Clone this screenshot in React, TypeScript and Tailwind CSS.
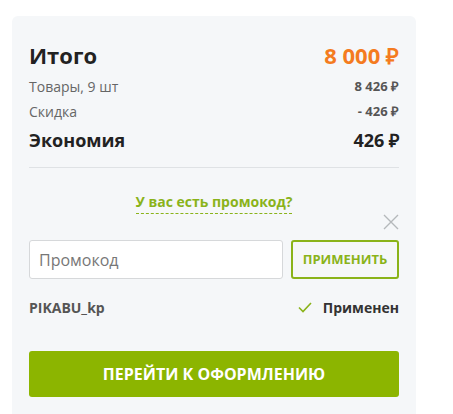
import { useState } from 'react';

interface Row {
  label: string;
  value: string;
}

const rows: Row[] = [
  { label: 'Товары, 9 шт', value: '8 426 ₽' },
  { label: 'Скидка', value: '- 426 ₽' },
];

export default function App() {
  const [code, setCode] = useState('');

  return (
    <div className="min-h-[414px] bg-white pt-4 pl-3 font-['Open_Sans',sans-serif]">
      <div className="w-[404px] rounded-t-md bg-[#f5f7f9] px-[17px] pt-[25px] pb-6">
        {/* Totals */}
        <div className="flex h-[28px] items-center justify-between">
          <span className="text-[22px] font-bold text-[#222]">Итого</span>
          <span className="text-[22px] font-bold text-[#f47b20]">8 000 ₽</span>
        </div>
        <div className="mt-[5px]">
          {rows.map((row) => (
            <div key={row.label} className="flex h-[25px] items-center justify-between">
              <span className="text-[14px] text-[#666]">{row.label}</span>
              <span className="text-[13px] font-bold text-[#555]">{row.value}</span>
            </div>
          ))}
        </div>
        <div className="mt-[2px] flex h-[28px] items-center justify-between">
          <span className="text-[18px] font-bold text-[#222]">Экономия</span>
          <span className="text-[18px] font-bold text-[#222]">426 ₽</span>
        </div>
        <div className="mt-[13px] h-px bg-[#dfe2e5]" />

        {/* Promo code */}
        <div className="mt-[24px] flex justify-center">
          <span className="border-b border-dashed border-[#8ab31a] pb-[1px] text-[14px] leading-[20px] font-bold text-[#8ab31a]">
            У вас есть промокод?
          </span>
        </div>
        <div className="flex justify-end">
          <button className="text-[#b5b8bb]" aria-label="Закрыть">
            <svg width="16" height="16" viewBox="0 0 16 16" fill="none" stroke="currentColor" strokeWidth="1.4">
              <path d="M1 1L15 15M15 1L1 15" />
            </svg>
          </button>
        </div>
        <div className="mt-[10px] flex gap-2">
          <input
            value={code}
            onChange={(e) => setCode(e.target.value)}
            placeholder="Промокод"
            className="h-[39px] flex-1 rounded-[3px] border border-[#d6d8da] bg-white px-[9px] text-[16px] text-[#333] outline-none placeholder:text-[#777]"
          />
          <button className="h-[39px] w-[108px] rounded-[3px] border-2 border-[#8ab31a] text-[13px] font-bold text-[#8ab31a]">
            ПРИМЕНИТЬ
          </button>
        </div>
        <div className="mt-[18px] flex h-[20px] items-center justify-between">
          <span className="text-[14px] font-bold text-[#555]">PIKABU_kp</span>
          <span className="flex items-center gap-[11px] text-[14px] font-bold text-[#333]">
            <svg width="14" height="11" viewBox="0 0 14 11" fill="none" stroke="#8ab31a" strokeWidth="1.6">
              <path d="M1 5.5L5 9.5L13 1" />
            </svg>
            Применен
          </span>
        </div>
        <button className="mt-[34px] h-[46px] w-full rounded-[3px] bg-[#8cb500] text-[16px] font-bold text-white">
          ПЕРЕЙТИ К ОФОРМЛЕНИЮ
        </button>
      </div>
    </div>
  );
}
